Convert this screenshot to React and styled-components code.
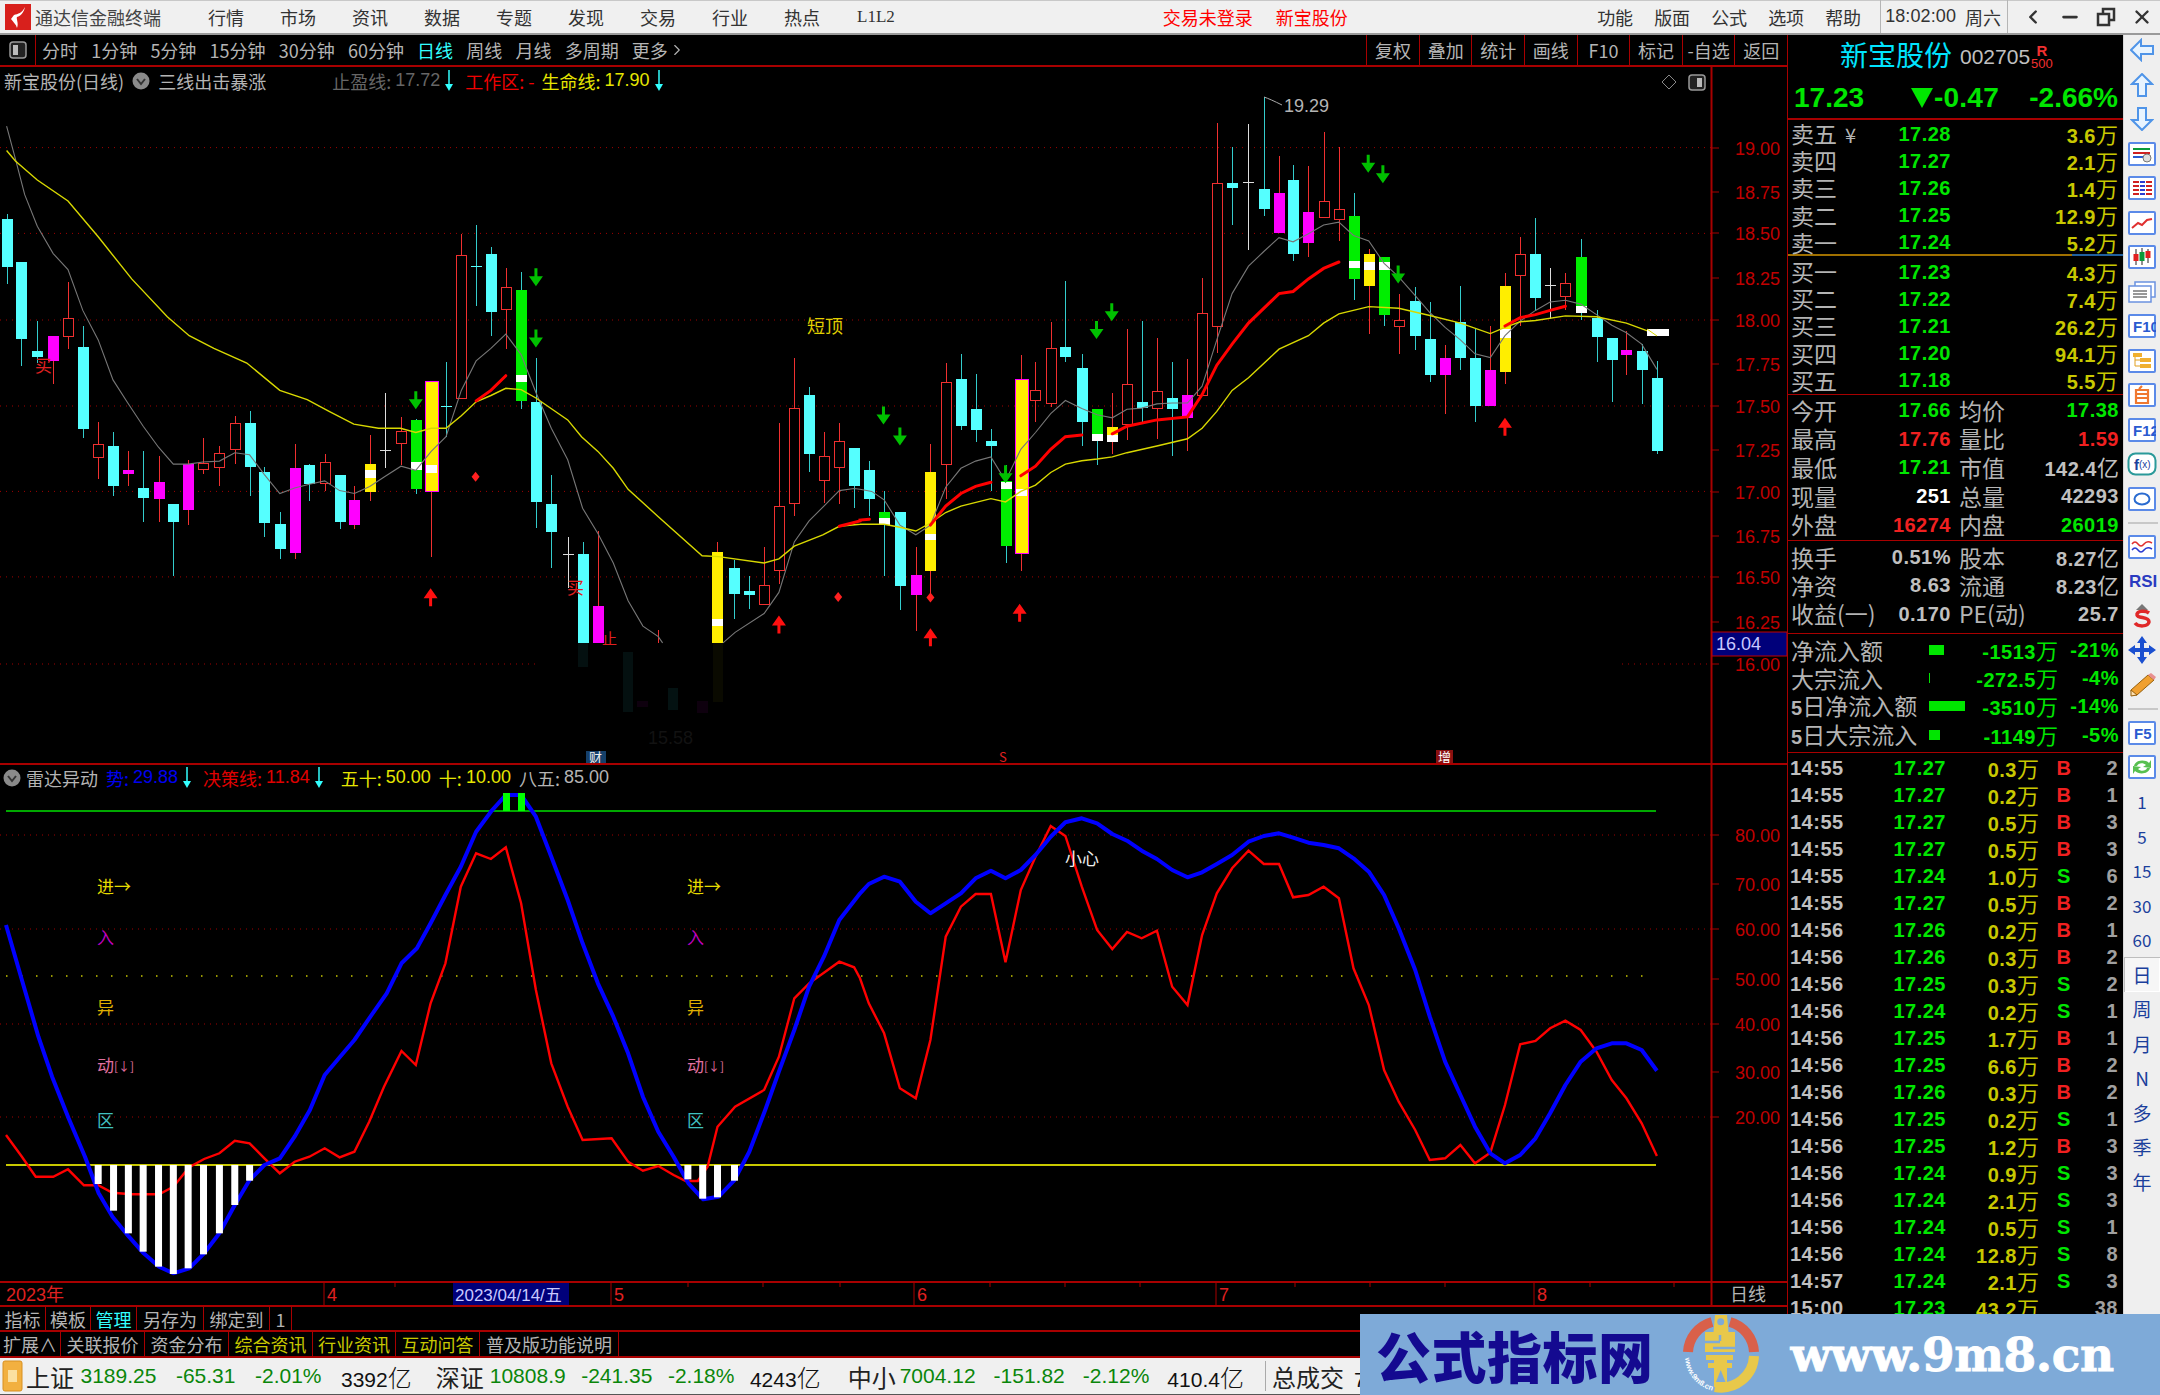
import React from 'react';
import styled, { createGlobalStyle } from 'styled-components';
import { ChevronLeft, Minus, X, ChevronRight } from 'lucide-react';

const RED_LINE = '#a80000';
const CJK = '"Noto Sans CJK SC", "Liberation Sans", sans-serif';
const LATIN = '"Liberation Sans", "Noto Sans CJK SC", sans-serif';

const GlobalStyle = createGlobalStyle`
    * { box-sizing: border-box; }
    html, body { margin: 0; padding: 0; background: #000; }
    body { font-family: ${CJK}; overflow: hidden; }
`;

const Page = styled.div`
    position: relative;
    width: 2160px;
    height: 1395px;
    background: #000;
    overflow: hidden;
`;

/* ---------- title bar ---------- */
const TitleBar = styled.header`
    display: flex;
    align-items: center;
    height: 35px;
    padding-left: 5px;
    padding-bottom: 1px;
    background: #f0f0f0;
    border-top: 1px solid #c8c8c8;
    border-bottom: 2px solid #9a9a9a;
    color: #333;
    font-size: 18px;
`;
const AppName = styled.span`margin-left: 4px; color: #444;`;
const MainMenu = styled.nav`
    display: flex;
    align-items: center;
    gap: 36px;
    margin-left: 47px;
`;
const MenuSerif = styled.span`
    font-family: "Liberation Serif", serif;
    font-size: 17px;
    margin-left: 1px;
`;
const Alert = styled.span`
    color: #f00;
    margin-left: ${p => p.$ml}px;
`;
const RightMenu = styled.nav`
    display: flex;
    gap: 21px;
    margin-left: auto;
`;
const ClockBox = styled.div`
    display: flex;
    gap: 9px;
    align-items: center;
    height: 33px;
    margin-left: 19px;
    padding: 0 6px 0 4px;
    border-left: 1px solid #b5b5b5;
    border-right: 1px solid #b5b5b5;
    font-size: 18px;
`;
const ClockTime = styled.span`font-family: ${LATIN}; letter-spacing: .1px;`;
const WindowButtons = styled.div`
    display: flex;
    align-items: center;
    gap: 15px;
    margin: 0 7px 0 14px;
    color: #333;
`;

/* ---------- layout ---------- */
const Main = styled.main`
    display: flex;
    height: 1323px;
`;
const LeftColumn = styled.div`
    display: flex;
    flex-direction: column;
    width: 1787px;
`;

/* ---------- period toolbar ---------- */
const Toolbar = styled.div`
    display: flex;
    align-items: center;
    height: 32px;
    border-bottom: 2px solid ${RED_LINE};
    color: #b4b4b4;
    font-size: 18px;
`;
const ToggleCell = styled.div`
    display: flex;
    align-items: center;
    justify-content: center;
    width: 36px;
    height: 100%;
    border-right: 1px solid ${RED_LINE};
`;
const Periods = styled.div`
    display: flex;
    gap: 13.2px;
    margin-left: 6px;
`;
const Period = styled.span`
    display: inline-flex;
    align-items: center;
    color: ${p => (p.$active ? '#3ff' : '#b4b4b4')};
`;
const ToolButtons = styled.div`
    display: flex;
    height: 100%;
    margin-left: auto;
`;
const ToolButton = styled.div`
    display: flex;
    align-items: center;
    justify-content: center;
    width: 52.6px;
    border-left: 1px solid ${RED_LINE};
`;

/* ---------- chart panes ---------- */
const Pane = styled.div`
    position: relative;
    height: ${p => p.$h}px;
    border-bottom: 2px solid ${RED_LINE};
`;
const ChartSvg = styled.svg`
    display: block;
`;
const Legend = styled.div`
    position: absolute;
    top: ${p => p.$top}px;
    left: 0;
    display: flex;
    align-items: center;
    height: 25px;
    padding-left: ${p => p.$pl}px;
    font-size: 18px;
    white-space: nowrap;
`;
const LegendItem = styled.span`
    color: ${p => p.$color || '#b4b4b4'};
    margin-left: ${p => p.$ml || 0}px;
    font-family: ${CJK};
    display: inline-flex;
    align-items: center;
    gap: 4px;
    b { font-weight: 400; font-family: ${LATIN}; }
`;
const AxisText = styled.text`
    font-family: ${LATIN};
    font-size: 18px;
    fill: ${p => p.$fill || '#c00000'};
`;
const ChartWord = styled.text`
    font-family: ${CJK};
    font-size: ${p => p.$size || 18}px;
    fill: ${p => p.$fill};
`;

/* ---------- tab rows below the charts ---------- */
const TabRow = styled.div`
    display: flex;
    height: ${p => p.$h}px;
    border-bottom: 2px solid ${RED_LINE};
`;
const Tab = styled.div`
    display: flex;
    align-items: center;
    justify-content: center;
    width: ${p => p.$w}px;
    border-right: 1px solid ${RED_LINE};
    color: ${p => p.$color || '#b4b4b4'};
    font-size: 18px;
    white-space: nowrap;
`;

/* ---------- quote panel ---------- */
const QuotePanel = styled.aside`
    display: flex;
    flex-direction: column;
    width: 336px;
    border-left: 1px solid ${RED_LINE};
    overflow: hidden;
`;
const StockHead = styled.div`
    display: flex;
    align-items: center;
    height: 45px;
    padding: 0 0 7px 52px;
`;
const StockName = styled.div`
    color: #00e4ff;
    font-size: 28px;
    line-height: 1;
`;
const StockCode = styled.div`
    margin-left: 8px;
    margin-top: 5px;
    color: #c0c0c0;
    font-family: ${LATIN};
    font-size: 21px;
`;
const Badges = styled.div`
    display: flex;
    flex-direction: column;
    align-items: center;
    margin-left: 1px;
    margin-top: 5px;
    color: #f03030;
    font-family: ${LATIN};
    line-height: 13px;
    font-size: 13px;
    b { font-size: 15px; }
`;
const PriceRow = styled.div`
    display: flex;
    align-items: center;
    justify-content: space-between;
    height: 40px;
    padding: 0 5px 2px 6px;
    border-bottom: 2px solid ${RED_LINE};
    color: #00e600;
    font-family: ${LATIN};
    font-weight: 700;
    font-size: 28px;
`;
const PriceDelta = styled.span`
    display: inline-flex;
    align-items: center;
    margin-left: 46px;
    letter-spacing: .2px;
`;
const PricePct = styled.span`margin-left: auto;`;
const Section = styled.section`
    height: ${p => p.$h}px;
    padding-top: ${p => p.$pt}px;
    border-bottom: 1px solid ${RED_LINE};
    flex: none;
`;
const OrderLine = styled(Section)`
    border-bottom: 2px solid;
    border-image: linear-gradient(to right, #a07000 0, #a07000 283px, #2060a0 283px, #2060a0 100%) 1;
`;
const OrderRow = styled.div`
    display: grid;
    grid-template-columns: 70px 90px 1fr;
    align-items: center;
    height: ${p => p.$row}px;
    padding: 0 5px 0 3px;
`;
const StatRow = styled.div`
    display: grid;
    grid-template-columns: 70px 90px 66px 1fr;
    align-items: center;
    height: ${p => p.$row}px;
    padding: 0 4px 0 3px;
`;
const FlowRow = styled.div`
    display: grid;
    grid-template-columns: 138px 40px 89px 1fr;
    align-items: center;
    height: 28.2px;
    padding: 0 4px 0 3px;
`;
const TickRow = styled.div`
    display: grid;
    grid-template-columns: 60px 96px 93px 50px 1fr;
    align-items: center;
    height: 27.03px;
    padding: 0 5px 0 2px;
`;
const Label = styled.span`
    color: #b4b4b4;
    font-size: 23px;
    line-height: 1;
    white-space: nowrap;
    padding-left: ${p => p.$pl || 0}px;
    i { font-style: normal; font-family: ${LATIN}; font-weight: 700; font-size: 20px; }
    small { font-size: 20px; margin-left: 8px; }
`;
const Num = styled.span`
    color: ${p => p.$color || '#c0c0c0'};
    font-family: ${LATIN};
    font-weight: 700;
    font-size: 20px;
    letter-spacing: .5px;
    line-height: 1;
    white-space: nowrap;
    text-align: ${p => p.$align || 'right'};
`;
const Unit = styled.span`
    font-family: ${CJK};
    font-weight: 400;
    font-size: 22px;
    letter-spacing: 0;
`;
const FlowBar = styled.span`
    display: block;
    width: ${p => p.$w}px;
    height: 10px;
    background: #00e600;
`;
const TickList = styled.div`
    padding-top: 1px;
    flex: 1;
    overflow: hidden;
`;

/* ---------- right icon strip ---------- */
const Strip = styled.nav`
    display: flex;
    flex-direction: column;
    width: 37px;
    background: #efefef;
    border-left: 1px solid #d8d8d8;
`;
const StripItem = styled.div`
    display: flex;
    align-items: center;
    justify-content: center;
    flex: none;
    height: 34.5px;
    color: #1b3f9c;
    font-family: ${CJK};
    font-size: ${p => p.$size || 17}px;
    box-shadow: ${p => (p.$on ? 'inset 1px 1px 0 #bdbdbd, inset -1px -1px 0 #fff' : 'none')};
    background: ${p => (p.$on ? '#f6f6f6' : 'transparent')};
    &:first-child { margin-top: -2px; }
`;
const StripRule = styled.div`
    flex: none;
    height: 13.5px;
    display: flex;
    align-items: center;
    &::after { content: ''; display: block; width: 30px; margin-left: 4px; height: 2px; background: #c8c8c8; }
`;

/* ---------- index ticker ---------- */
const StatusBar = styled.footer`
    display: flex;
    align-items: center;
    height: 37px;
    padding-left: 2px;
    background: #f0f0f0;
    border-bottom: 1px solid #555;
    white-space: nowrap;
    overflow: hidden;
`;
const IndexGroup = styled.div`
    display: flex;
    align-items: center;
    gap: ${p => p.$gap}px;
    margin-left: ${p => p.$ml}px;
`;
const IndexName = styled.span`
    color: #222;
    font-size: 24px;
    margin-right: ${p => p.$mr}px;
`;
const IndexNum = styled.span`
    color: ${p => p.$color || '#0a860a'};
    font-family: ${LATIN};
    font-size: 21px;
    span { font-family: ${CJK}; font-size: 24px; font-weight: 300; }
`;
const StatusRule = styled.div`
    width: 1px;
    height: 30px;
    margin: 0 6px 0 21px;
    background: #aaa;
`;

/* ---------- watermark ---------- */
const Watermark = styled.div`
    position: absolute;
    left: 1360px;
    right: 0;
    top: 1314px;
    bottom: 0;
    display: flex;
    align-items: center;
    background: #7eaad8;
`;
const MarkTitle = styled.div`
    margin-left: 16px;
    color: #140a90;
    font-family: ${CJK};
    font-weight: 900;
    font-size: 55px;
    letter-spacing: 0.5px;
    line-height: 1;
    white-space: nowrap;
`;
const MarkLogo = styled.div`
    display: flex;
    margin-left: 29px;
`;
const MarkUrl = styled.div`
    margin-left: 30px;
    color: #fff;
    font-family: "DejaVu Serif", serif;
    font-weight: 700;
    font-size: 47px;
    letter-spacing: -.4px;
    line-height: 1;
    white-space: nowrap;
    -webkit-text-stroke: .8px #fff;
`;

/* ---------- small drawings ---------- */
const AppLogo = () => (
    <svg width="26" height="26" viewBox="0 0 26 26">
        <rect width="26" height="26" fill="#d8201c" />
        <path d="M20 3 C17 9 13 10 9 11 L6 15 C8 18 11 20 12 24 C14 19 11 15 12 13 C16 12 19 8 20 3Z" fill="#fff" />
    </svg>
);
const RestoreIcon = () => (
    <svg width="20" height="20" viewBox="0 0 20 20" fill="none" stroke="#333" strokeWidth="2.5">
        <rect x="2" y="7" width="11" height="11" />
        <path d="M7 6 V2 H18 V13 H14" />
    </svg>
);
const PaneToggle = ({ side = 'left' }) => (
    <svg width="18" height="18" viewBox="0 0 18 18">
        <rect x="1" y="1" width="16" height="16" rx="3" fill="#222" stroke="#999" strokeWidth="1.5" />
        <rect x={side === 'left' ? 4 : 9} y="4" width="5" height="10" fill="#bbb" />
    </svg>
);
const RoundToggle = () => (
    <svg width="18" height="18" viewBox="0 0 18 18">
        <circle cx="9" cy="9" r="8.5" fill="#8a8a8a" />
        <path d="M5 7 L9 12 L13 7" fill="none" stroke="#333" strokeWidth="2" />
    </svg>
);
const ValueArrow = () => (
    <svg width="10" height="22" viewBox="0 0 10 22">
        <path d="M5 0 V16" stroke="#3ff" strokeWidth="1.5" />
        <path d="M1 14 H9 L5 21Z" fill="#3ff" />
    </svg>
);

const HollowArrow = ({ dir }) => {
    const rot = { left: -90, up: 0, down: 180 }[dir];
    return (
        <svg width="24" height="24" viewBox="0 0 24 24">
            <path transform={`rotate(${rot} 12 12)`} d="M12 1 L22 11 H16 V23 H8 V11 H2Z" fill="#e8f4ff" stroke="#4f94e8" strokeWidth="2" />
        </svg>
    );
};
const FrameIcon = ({ children }) => (
    <svg width="28" height="24" viewBox="0 0 28 24">
        <rect x="1" y="1" width="26" height="22" fill="#fff" stroke="#5b8ae8" strokeWidth="2" rx="1" />
        {children}
    </svg>
);
const FrameText = styled.text`
    font-family: ${LATIN};
    font-size: 15px;
    fill: ${p => p.$fill || '#2a5bd0'};
    font-weight: ${p => p.$weight || 400};
`;
const stripIcons = [
    <HollowArrow dir="left" />,
    <HollowArrow dir="up" />,
    <HollowArrow dir="down" />,
    <FrameIcon>
        <path d="M5 7 H22" stroke="#0a9a3a" strokeWidth="2" /><path d="M5 11 H22" stroke="#d02020" strokeWidth="2" />
        <path d="M5 15 H15" stroke="#2a5bd0" strokeWidth="2" />
        <circle cx="19" cy="16" r="4" fill="#ddd" stroke="#777" />
    </FrameIcon>,
    <FrameIcon>
        {[6, 10, 14, 18].map(y => (
            <g key={y}>
                <path d={`M5 ${y} H11`} stroke="#d02020" strokeWidth="2" />
                <path d={`M12 ${y} H17`} stroke="#2a3bd0" strokeWidth="2" />
                <path d={`M18 ${y} H24`} stroke="#d02020" strokeWidth="2" />
            </g>
        ))}
    </FrameIcon>,
    <FrameIcon><path d="M4 17 L10 12 L14 14 L19 9 L24 8" fill="none" stroke="#e03030" strokeWidth="2" /></FrameIcon>,
    <FrameIcon>
        <path d="M8 4 V20 M14 3 V20 M20 4 V18" stroke="#222" />
        <rect x="5.5" y="9" width="5" height="7" fill="#e02020" /><rect x="11.5" y="7" width="5" height="9" fill="#0a9a3a" /><rect x="17.5" y="6" width="5" height="7" fill="#e02020" />
    </FrameIcon>,
    <svg width="30" height="24" viewBox="0 0 30 24" fill="#fff" stroke="#6b92e0" strokeWidth="1.5">
        <rect x="8" y="2" width="20" height="15" /><rect x="2" y="6" width="22" height="16" />
        <path d="M6 11 H20 M6 14 H20 M6 17 H20" stroke="#777" />
    </svg>,
    <FrameIcon><FrameText x="5" y="18" $weight="700">F10</FrameText></FrameIcon>,
    <FrameIcon>
        <path d="M7 7 V17 H12 M7 11 H12" stroke="#e0a020" fill="none" />
        <rect x="5" y="4" width="9" height="4" fill="#f0b030" /><rect x="12" y="9" width="11" height="4" fill="#f0b030" /><rect x="12" y="15" width="11" height="4" fill="#f0b030" />
    </FrameIcon>,
    <FrameIcon>
        <path d="M14 3 L11 6 M8 7 H20 V20 H8Z M8 11 H20 M8 15 H20" fill="none" stroke="#f07830" strokeWidth="2.2" />
    </FrameIcon>,
    <FrameIcon><FrameText x="5" y="18" $weight="700">F12</FrameText></FrameIcon>,
    <svg width="30" height="24" viewBox="0 0 30 24">
        <rect x="1.5" y="1.5" width="27" height="21" rx="7" fill="#fff" stroke="#2a9a9a" strokeWidth="2" />
        <FrameText x="7" y="18" $fill="#1b3f9c" $weight="700">f</FrameText>
        <FrameText x="12" y="16" $fill="#1b3f9c" style={{ fontSize: 10 }}>(x)</FrameText>
    </svg>,
    <FrameIcon><ellipse cx="14" cy="12" rx="7.5" ry="5.5" fill="#fff" stroke="#2a6bd0" strokeWidth="2" /></FrameIcon>,
];
const stripIconsB = [
    <FrameIcon>
        <path d="M4 9 Q7 5 10 9 T16 9 T24 8" fill="none" stroke="#e03030" strokeWidth="1.5" />
        <path d="M4 15 Q7 11 10 15 T16 15 T24 14" fill="none" stroke="#2a3bd0" strokeWidth="1.5" />
    </FrameIcon>,
    <svg width="30" height="20" viewBox="0 0 30 20"><FrameText x="2" y="16" $fill="#2a3ac0" $weight="700" style={{ fontSize: 17 }}>RSI</FrameText></svg>,
    <svg width="28" height="26" viewBox="0 0 28 26">
        <path d="M14 1 L20 7 H8Z" fill="#777" />
        <path d="M21 10 C17 7 8 8 9 12 C10 16 21 13 21 19 C20 24 10 24 7 20" fill="none" stroke="#e02828" strokeWidth="3.5" />
    </svg>,
    <svg width="28" height="28" viewBox="0 0 28 28" fill="#1a4fd0">
        <path d="M14 0 L19 7 H9Z M14 28 L9 21 H19Z M0 14 L7 9 V19Z M28 14 L21 19 V9Z" />
        <path d="M14 6 V22 M6 14 H22" stroke="#1a4fd0" strokeWidth="4" />
    </svg>,
    <svg width="28" height="26" viewBox="0 0 28 26">
        <path d="M4 23 L3 18 L20 3 L26 8 L9 23Z" fill="#f0a030" stroke="#96600c" />
        <path d="M3 18 L9 23 L3 24Z" fill="#ffe0b0" stroke="#96600c" />
        <path d="M20 3 L26 8 L28 5 L23 1Z" fill="#e89090" />
    </svg>,
];
const stripIconsC = [
    <FrameIcon><FrameText x="6" y="18" $weight="700">F5</FrameText></FrameIcon>,
    <FrameIcon>
        <path d="M6 11 C7 5 17 4 21 8 L23 5 L23 13 L15 12 L18 10 C15 7 10 8 9 11Z" fill="#58c050" />
        <path d="M22 13 C21 19 11 20 7 16 L5 19 L5 11 L13 12 L10 14 C13 17 18 16 19 13Z" fill="#58c050" />
    </FrameIcon>,
];

const Logo = () => (
    <svg width="78" height="80" viewBox="0 0 78 80">
        <defs>
            <path id="markArc" d="M2 43 A36 36 0 0 0 31 76" fill="none" />
        </defs>
        <path d="M5 37 A33 33 0 0 1 29 7" fill="none" stroke="#d9604a" strokeWidth="10" />
        <path d="M71 37 A33 33 0 0 0 47 7" fill="none" stroke="#d9604a" strokeWidth="10" />
        <path d="M71 41 A33 33 0 0 1 32 72" fill="none" stroke="#e8c84a" strokeWidth="10" />
        <text fill="#fff" fontFamily={LATIN} fontSize="7.5" fontWeight="700">
            <textPath href="#markArc">www.9m8.cn</textPath>
        </text>
        <path d="M32 0 H44 L45.5 17 H52 V37 H22 V17 H30.5Z" fill="#e8c84a" />
        <circle cx="37.7" cy="6.7" r="3.5" fill="#7eaad8" />
        <path d="M22 27 H37 M30 33 H52 M37 20 V26" stroke="#7eaad8" strokeWidth="2.5" fill="none" />
        <rect x="23" y="40" width="27" height="5" fill="#e8c84a" />
        <rect x="25" y="48" width="24" height="5" fill="#e8c84a" />
        <path d="M31 40 H44 V72 H31Z" fill="#e8c84a" />
        <path d="M37.7 55 L33 67 H42.5Z" fill="#7eaad8" />
    </svg>
);

/* ---------- price chart data, x/y as read off the two halves of the chart ---------- */
const leftPt = (x, y) => [x / 1.823, 100 + y / 2.376];
const rightPt = (x, y) => [860 + x / 1.704, 100 + y / 2.376];

// x, wick top, wick bottom, body top, body bottom, kind, white mark top, white mark bottom
const candlesLeft = [
    [12, 272, 436, 283, 397, 'c'], [39, 385, 632, 386, 567, 'c'], [67, 525, 625, 597, 610, 'c'], [97, 560, 675, 561, 620, 'm'],
    [124, 432, 592, 520, 563, 'r'], [151, 537, 803, 586, 782, 'c'], [179, 765, 900, 819, 849, 'r'], [206, 790, 942, 822, 917, 'c'],
    [233, 833, 917, 879, 889, 'm'], [261, 833, 1003, 921, 945, 'c'], [289, 847, 1003, 908, 948, 'm'], [316, 960, 1131, 961, 1003, 'c'],
    [343, 855, 1010, 864, 973, 'm'], [370, 803, 889, 864, 877, 'r'], [400, 822, 917, 841, 873, 'r'], [428, 750, 865, 769, 831, 'r'],
    [455, 740, 942, 768, 873, 'c'], [482, 872, 1038, 885, 1005, 'c'], [510, 978, 1090, 1007, 1067, 'c'], [537, 818, 1090, 875, 1077, 'm'],
    [564, 865, 953, 868, 913, 'c'], [592, 842, 930, 862, 912, 'r'], [619, 890, 1020, 890, 1003, 'c'], [646, 918, 1020, 950, 1010, 'm'],
    [674, 797, 952, 864, 931, 'y', 880, 897], [701, 697, 875, 832, 835, 'w'], [731, 754, 868, 787, 816, 'r'],
    [758, 757, 935, 761, 925, 'g', 860, 880], [786, 670, 1085, 670, 931, 'Y', 868, 886], [813, 622, 800, 726, 729, 'c'],
    [841, 318, 708, 370, 709, 'r'], [868, 297, 490, 394, 397, 'c'], [895, 350, 560, 365, 503, 'c'], [922, 398, 592, 445, 498, 'r'],
    [950, 408, 735, 451, 714, 'g', 654, 670], [977, 612, 1017, 718, 955, 'c'], [1005, 890, 1113, 961, 1027, 'c'],
    [1035, 1038, 1160, 1079, 1082, 'w'], [1062, 1050, 1290, 1078, 1290, 'c'], [1090, 1025, 1290, 1203, 1290, 'm'], [1200, 1260, 1290, 1290, 1290, 'r'],
    [1308, 1050, 1290, 1075, 1290, 'y', 1232, 1250], [1338, 1092, 1232, 1113, 1173, 'c'], [1366, 1132, 1210, 1166, 1177, 'c'],
    [1393, 1062, 1200, 1153, 1198, 'r'], [1420, 768, 1150, 965, 1118, 'r'], [1448, 612, 988, 733, 958, 'r'], [1475, 683, 885, 700, 842, 'c'],
    [1502, 790, 958, 847, 905, 'r'], [1530, 768, 960, 811, 872, 'r'], [1557, 828, 970, 828, 917, 'c'],
];
const candlesRight = [
    [16, 857, 988, 879, 948, 'c'], [41, 930, 1130, 978, 1010, 'g', 993, 1010], [68, 978, 1212, 978, 1155, 'c'], [95, 1063, 1262, 1128, 1176, 'm'],
    [120, 818, 1180, 885, 1120, 'y', 1032, 1045], [146, 625, 948, 672, 866, 'r'], [172, 603, 785, 664, 775, 'c'], [197, 650, 813, 735, 785, 'c'],
    [223, 782, 928, 810, 821, 'c'], [248, 868, 1100, 905, 1060, 'g', 908, 925], [274, 607, 1120, 664, 1077, 'Y', 925, 942], [299, 622, 765, 690, 713, 'r'],
    [325, 528, 730, 590, 720, 'r'], [350, 430, 622, 586, 611, 'c'], [378, 603, 822, 636, 764, 'c'], [404, 733, 868, 733, 810, 'g', 793, 810],
    [430, 697, 840, 778, 813, 'y', 797, 813], [455, 543, 808, 677, 770, 'r'], [480, 525, 766, 718, 732, 'c'], [506, 565, 805, 693, 733, 'r'],
    [532, 622, 846, 707, 735, 'c'], [558, 615, 835, 700, 756, 'm'], [583, 422, 700, 508, 702, 'r'], [608, 55, 600, 198, 538, 'r'],
    [634, 112, 298, 198, 210, 'c'], [662, 58, 356, 194, 197, 'w'], [688, -6, 275, 212, 258, 'c'], [714, 133, 315, 220, 315, 'm'],
    [738, 155, 382, 190, 365, 'c'], [764, 158, 372, 265, 340, 'm'], [790, 75, 280, 241, 278, 'r'], [816, 112, 335, 259, 283, 'r'],
    [841, 222, 475, 276, 425, 'g', 382, 400], [867, 355, 555, 365, 442, 'y', 385, 403], [893, 372, 537, 372, 510, 'g', 385, 403], [918, 462, 603, 523, 538, 'r'],
    [946, 445, 595, 477, 561, 'c'], [971, 480, 670, 568, 653, 'c'], [997, 583, 746, 614, 653, 'm'], [1023, 443, 642, 527, 614, 'c'],
    [1048, 545, 765, 614, 728, 'c'], [1074, 537, 728, 642, 728, 'm'], [1099, 412, 675, 443, 646, 'y', 545, 565], [1125, 325, 538, 367, 417, 'r'],
    [1151, 280, 500, 365, 471, 'c'], [1176, 398, 520, 439, 442, 'w'], [1202, 412, 500, 437, 466, 'r'], [1228, 330, 522, 372, 490, 'g', 490, 507],
    [1255, 500, 622, 517, 563, 'c'], [1281, 565, 718, 565, 617, 'c'], [1306, 550, 654, 593, 607, 'm'], [1332, 580, 722, 597, 642, 'c'], [1358, 620, 842, 660, 835, 'c'],
];
const CANDLE = {
    c: { wick: '#3cc', body: '#55ffff' },
    r: { wick: '#f03030', body: null },
    m: { wick: '#f03030', body: '#ff00ff' },
    g: { wick: '#3cc', body: '#00ee00' },
    y: { wick: '#f03030', body: '#ffee00' },
    Y: { wick: '#f03030', body: '#ffee00', edge: '#ff00ff' },
    w: { wick: '#ddd', body: '#ddd' },
};

const pairs = (arr, fn) => {
    const out = [];
    for (let i = 0; i < arr.length; i += 2) out.push(fn(arr[i], arr[i + 1]));
    return out;
};
const toPoints = list => list.map(p => p.map(v => v.toFixed(1)).join(',')).join(' ');

const grayLineA = pairs([12, 62, 28, 140, 45, 225, 68, 300, 97, 365, 124, 403, 151, 500, 179, 570, 206, 665, 233, 720, 261, 775, 289, 825, 316, 865, 343, 865, 370, 860, 400, 858, 428, 838, 455, 843, 482, 890, 510, 935, 537, 922, 564, 913, 592, 905, 619, 928, 646, 935, 674, 918, 701, 895, 731, 870, 758, 880, 786, 835, 813, 800, 841, 690, 868, 620, 895, 590, 922, 556, 950, 605, 977, 695, 1005, 780, 1035, 855, 1062, 970, 1090, 1030, 1118, 1100, 1145, 1190, 1172, 1250, 1200, 1275, 1208, 1290], leftPt);
const grayLineB = [
    ...pairs([1318, 1290, 1340, 1265, 1393, 1220, 1420, 1170, 1448, 1050, 1475, 1000, 1502, 965, 1530, 928, 1557, 923], leftPt),
    ...pairs([0, 925, 20, 930, 41, 950, 68, 1010, 95, 1033, 120, 1010, 146, 920, 172, 875, 197, 858, 223, 848, 248, 905, 274, 830, 299, 790, 325, 745, 350, 714, 378, 733, 404, 748, 430, 755, 455, 735, 480, 732, 506, 722, 532, 720, 558, 720, 583, 680, 608, 570, 634, 460, 662, 395, 688, 360, 714, 327, 738, 337, 764, 318, 790, 297, 816, 290, 841, 322, 867, 335, 893, 388, 918, 420, 946, 465, 971, 505, 997, 540, 1023, 570, 1048, 603, 1074, 612, 1099, 560, 1125, 525, 1151, 500, 1176, 480, 1202, 476, 1228, 485, 1255, 510, 1281, 535, 1306, 553, 1332, 580, 1358, 640], rightPt),
];
const yellowLine = [
    ...pairs([12, 120, 28, 145, 68, 190, 124, 240, 179, 325, 240, 425, 305, 515, 345, 560, 390, 590, 450, 625, 510, 690, 560, 712, 600, 740, 645, 770, 690, 780, 730, 780, 758, 790, 786, 780, 813, 780, 841, 750, 868, 717, 895, 702, 922, 685, 950, 688, 977, 708, 1035, 760, 1060, 800, 1090, 835, 1118, 875, 1145, 925, 1200, 990, 1280, 1083, 1310, 1085, 1393, 1100, 1420, 1090, 1448, 1060, 1500, 1033, 1530, 1013, 1568, 1008], leftPt),
    ...pairs([0, 1008, 41, 1008, 68, 1015, 95, 1024, 120, 1005, 146, 980, 172, 965, 223, 947, 248, 955, 274, 930, 299, 915, 325, 885, 350, 865, 378, 857, 404, 853, 430, 848, 455, 838, 506, 822, 558, 805, 583, 780, 608, 740, 634, 690, 662, 660, 714, 592, 764, 560, 790, 530, 816, 508, 867, 491, 918, 495, 971, 512, 1023, 530, 1074, 555, 1099, 540, 1125, 527, 1151, 524, 1202, 513, 1255, 515, 1306, 530, 1358, 557], rightPt),
];
const redRuns = [
    pairs([868, 715, 895, 690, 922, 655], leftPt),
    [...pairs([1530, 1013, 1568, 1000], leftPt), ...pairs([0, 998, 16, 996], rightPt)],
    pairs([120, 1010, 146, 965, 172, 935, 197, 918, 223, 908], rightPt),
    pairs([274, 893, 299, 870, 325, 830, 350, 800, 378, 796], rightPt),
    pairs([430, 793, 455, 775, 506, 760, 558, 753, 583, 700, 608, 630, 634, 580, 662, 530, 714, 460, 738, 455, 764, 425, 790, 400, 816, 385], rightPt),
    pairs([1099, 537, 1125, 517, 1151, 510, 1176, 500, 1202, 490], rightPt),
];
const arrowsDown = [
    ...pairs([758, 692, 977, 400, 977, 545], leftPt),
    ...pairs([40, 728, 68, 778, 248, 868, 403, 525, 429, 483, 866, 130, 891, 155, 917, 393], rightPt),
];
const arrowsUp = [
    ...pairs([785, 1160, 1420, 1225], leftPt),
    ...pairs([120, 1255, 272, 1197, 1099, 755], rightPt),
];
const diamonds = [...pairs([867, 895, 1528, 1181], leftPt), ...pairs([120, 1182], rightPt)];

const priceGrid = [147.6, 233.4, 320, 406, 491.4, 576.9];
const priceLabels = [
    ['19.00', 148], ['18.75', 192], ['18.50', 233], ['18.25', 278], ['18.00', 320], ['17.75', 364], ['17.50', 406],
    ['17.25', 450], ['17.00', 492], ['16.75', 536], ['16.50', 577], ['16.25', 622], ['16.00', 664],
];

const Candle = ({ pt, data }) => {
    const [, wt, wb, bt, bb, kind, mt, mb] = data;
    const style = CANDLE[kind];
    const x = Math.round(pt(data[0], 0)[0]);
    const y = v => 100 + v / 2.376;
    const hollow = !style.body;
    const half = kind === 'Y' ? 6 : 5;
    return (
        <g shapeRendering="crispEdges">
            {hollow ? (
                <>
                    <path d={`M${x + 0.5} ${y(wt)} V${y(bt)} M${x + 0.5} ${y(bb)} V${y(wb)}`} stroke={style.wick} />
                    <rect x={x - 4.5} y={y(bt)} width="10" height={y(bb) - y(bt)} fill="#000" stroke={style.wick} />
                </>
            ) : (
                <>
                    <path d={`M${x + 0.5} ${y(wt)} V${y(wb)}`} stroke={style.wick} />
                    <rect x={x - half} y={y(bt)} width={half * 2 + 1} height={Math.max(y(bb) - y(bt), 1)} fill={style.body} stroke={style.edge || 'none'} />
                </>
            )}
            {mt && <rect x={x - 5} y={y(mt)} width="11" height={y(mb) - y(mt)} fill="#fff" />}
        </g>
    );
};

const Arrow = ({ x, y, up, color }) => (
    up ? (
        <path d={`M${x} ${y} L${x + 7} ${y + 10} H${x + 1.5} V${y + 18} H${x - 1.5} V${y + 10} H${x - 7}Z`} fill={color} />
    ) : (
        <path d={`M${x} ${y + 18} L${x + 7} ${y + 8} H${x + 1.5} V${y} H${x - 1.5} V${y + 8} H${x - 7}Z`} fill={color} />
    )
);

const PriceChart = () => (
    <ChartSvg width="1787" height="696" viewBox="0 67 1787 696">
        {priceGrid.map(y => <path key={y} d={`M0 ${y} H1711`} stroke="#a00000" strokeDasharray="1 5" />)}
        <path d="M0 664 H537 M1622 664 H1711" stroke="#a00000" strokeDasharray="1 5" />

        {/* faint leftovers under the cut-off part of the chart */}
        <g>
            <rect x="578" y="643" width="10" height="24" fill="#041010" />
            <rect x="623" y="652" width="10" height="60" fill="#041010" />
            <rect x="637" y="701" width="11" height="6" fill="#0e000e" />
            <rect x="668" y="688" width="10" height="22" fill="#041212" />
            <rect x="697" y="701" width="11" height="12" fill="#0e000e" />
            <rect x="713" y="643" width="10" height="59" fill="#0a0a00" />
        </g>
        <AxisText x="648" y="744" $fill="#121212">15.58</AxisText>

        {candlesLeft.map(c => <Candle key={c[0]} pt={leftPt} data={c} />)}
        {candlesRight.map(c => <Candle key={c[0]} pt={rightPt} data={c} />)}

        <polyline points={toPoints(grayLineA)} fill="none" stroke="#777" strokeWidth="1.1" />
        <polyline points={toPoints(grayLineB)} fill="none" stroke="#777" strokeWidth="1.1" />
        <polyline points={toPoints(yellowLine)} fill="none" stroke="#d8d800" strokeWidth="1.4" />
        {redRuns.map((run, i) => <polyline key={i} points={toPoints(run)} fill="none" stroke="#ff0000" strokeWidth="3" strokeLinecap="round" />)}
        <rect x="1647" y="329" width="22" height="7" fill="#fff" />
        <path d="M1647 329 L1657 336" stroke="#d8d800" />

        {arrowsDown.map(([x, y], i) => <Arrow key={i} x={x} y={y} color="#00c000" />)}
        {arrowsUp.map(([x, y], i) => <Arrow key={i} x={x} y={y} up color="#ff1010" />)}
        {diamonds.map(([x, y], i) => <path key={i} d={`M${x} ${y - 5} L${x + 4} ${y} L${x} ${y + 5} L${x - 4} ${y}Z`} fill="#ff2020" />)}

        <ChartWord x="35" y="372" $fill="#e02020" $size="17">买</ChartWord>
        <ChartWord x="567" y="594" $fill="#e02020" $size="17">买</ChartWord>
        <ChartWord x="602" y="644" $fill="#e02020" $size="15">止</ChartWord>
        <ChartWord x="807" y="333" $fill="#e0d000" $size="18">短顶</ChartWord>
        <path d="M1264 97 Q1270 99 1282 105" fill="none" stroke="#aaa" />
        <AxisText x="1284" y="112" $fill="#b4b4b4">19.29</AxisText>

        <rect x="586" y="751" width="20" height="12" fill="#16406a" />
        <ChartWord x="589" y="762" $fill="#eee" $size="13">财</ChartWord>
        <ChartWord x="999" y="762" $fill="#e02020" $size="13">S</ChartWord>
        <rect x="1436" y="750" width="17" height="13" fill="#8a1010" />
        <ChartWord x="1438" y="762" $fill="#fff" $size="13">增</ChartWord>

        <path d="M1669 75 L1676 82 L1669 89 L1662 82Z" fill="none" stroke="#888" />
        <rect x="1689" y="75" width="16" height="15" rx="3" fill="#222" stroke="#999" strokeWidth="1.5" />
        <rect x="1697" y="78" width="5" height="9" fill="#bbb" />

        <path d="M1711.5 67 V763" stroke={RED_LINE} strokeWidth="2" />
        {priceLabels.map(([t, y]) => (
            <g key={t}>
                <path d={`M1712 ${y} H1719`} stroke={RED_LINE} />
                <AxisText x="1735" y={y + 7}>{t}</AxisText>
            </g>
        ))}
        <rect x="1712" y="632" width="75" height="24" fill="#00007a" stroke="#c00000" />
        <AxisText x="1716" y="650" $fill="#c8c8ff">16.04</AxisText>
    </ChartSvg>
);

/* ---------- indicator data ---------- */
const blueLine = [
    ...pairs([11, 495, 40, 660, 70, 830, 95, 950, 125, 1075, 155, 1190, 180, 1300, 205, 1370, 235, 1430, 262, 1480, 290, 1520, 316, 1540, 345, 1525, 372, 1480, 400, 1420, 428, 1335, 455, 1260, 482, 1215, 510, 1195, 537, 1130, 565, 1050, 592, 945, 620, 890, 646, 840, 673, 775, 705, 700, 732, 610, 760, 565, 785, 490, 812, 405, 840, 320, 868, 215, 895, 155, 922, 105, 950, 105, 977, 170, 1005, 290, 1035, 420, 1062, 550, 1090, 670, 1118, 770, 1145, 880, 1172, 1010, 1200, 1115, 1228, 1190, 1255, 1270, 1282, 1318, 1310, 1310, 1338, 1262, 1366, 1175, 1395, 1050, 1420, 935, 1448, 810, 1475, 680, 1502, 590, 1530, 480, 1568, 400], (x, y) => [x / 1.823, 760 + y / 3]),
    ...pairs([15, 372, 41, 350, 68, 365, 95, 425, 120, 460, 146, 430, 172, 400, 197, 355, 223, 332, 248, 355, 274, 330, 299, 285, 325, 230, 350, 187, 378, 175, 404, 190, 430, 222, 455, 242, 480, 272, 506, 297, 532, 330, 558, 352, 583, 337, 608, 312, 634, 285, 662, 245, 688, 228, 714, 220, 738, 233, 764, 248, 790, 255, 816, 265, 841, 295, 867, 335, 893, 405, 918, 505, 946, 630, 971, 770, 997, 905, 1023, 1005, 1048, 1100, 1074, 1180, 1099, 1210, 1125, 1185, 1151, 1135, 1176, 1060, 1202, 975, 1228, 905, 1255, 865, 1281, 850, 1306, 850, 1332, 870, 1358, 932], (x, y) => [860 + x / 1.704, 760 + y / 3]),
];
const redLine = [
    ...pairs([11, 1125, 40, 1190, 65, 1250, 97, 1250, 124, 1228, 153, 1276, 179, 1276, 205, 1298, 240, 1303, 290, 1303, 316, 1280, 345, 1222, 372, 1197, 400, 1180, 428, 1142, 455, 1150, 482, 1195, 510, 1240, 537, 1205, 564, 1190, 592, 1165, 619, 1192, 646, 1175, 673, 1085, 700, 980, 732, 873, 758, 915, 785, 730, 812, 610, 840, 380, 868, 280, 895, 297, 922, 262, 950, 430, 977, 690, 1005, 910, 1035, 1040, 1062, 1140, 1115, 1135, 1145, 1205, 1172, 1232, 1200, 1218, 1228, 1245, 1250, 1263, 1272, 1263, 1290, 1220, 1308, 1100, 1340, 1040, 1393, 990, 1420, 890, 1448, 715, 1475, 670, 1530, 605, 1557, 622], (x, y) => [x / 1.823, 760 + y / 3]),
    ...pairs([0, 655, 15, 730, 41, 820, 68, 985, 95, 1015, 120, 840, 146, 530, 172, 440, 197, 402, 223, 402, 248, 607, 274, 390, 299, 290, 325, 198, 350, 228, 378, 380, 404, 510, 430, 567, 455, 516, 480, 535, 506, 512, 532, 680, 558, 735, 583, 525, 608, 400, 634, 325, 662, 272, 688, 312, 714, 312, 738, 412, 764, 405, 790, 380, 816, 415, 841, 625, 867, 735, 893, 930, 918, 1025, 946, 1110, 971, 1200, 997, 1195, 1023, 1155, 1048, 1210, 1074, 1178, 1099, 1035, 1125, 853, 1151, 843, 1176, 805, 1202, 782, 1228, 810, 1255, 875, 1281, 960, 1306, 1015, 1332, 1090, 1358, 1188], (x, y) => [860 + x / 1.704, 760 + y / 3]),
];
const whiteBars = [
    [179, 1272], [207, 1352], [234, 1420], [261, 1475], [289, 1520], [316, 1542], [343, 1525], [371, 1483], [400, 1420], [428, 1335], [455, 1262],
    [1254, 1258], [1281, 1316], [1308, 1312], [1339, 1262],
];
const signalWords = [
    ['进→', 887, '#e6dc00'], ['入', 938, '#c000c0'], ['异', 1008, '#e0b000'], ['动', 1066, '#e070a0', '[↓]'], ['区', 1121, '#40c0c0'],
];
const indicatorGrid = [835, 929, 1024, 1117];
const indicatorLabels = [['80.00', 835], ['70.00', 884], ['60.00', 929], ['50.00', 979], ['40.00', 1024], ['30.00', 1072], ['20.00', 1117]];

const IndicatorChart = () => (
    <ChartSvg width="1787" height="516" viewBox="0 765 1787 516">
        {indicatorGrid.map(y => <path key={y} d={`M0 ${y} H1711`} stroke="#a00000" strokeDasharray="1 5" />)}
        <path d="M6 976 H1656" stroke="#c8c800" strokeWidth="1.5" strokeDasharray="1.5 13.5" />

        <path d="M6 811 H1656" stroke="#00a800" strokeWidth="2" />
        <path d="M6 1165 H1656" stroke="#c8c800" strokeWidth="2" />

        <polyline points={toPoints(redLine)} fill="none" stroke="#ff0000" strokeWidth="2.4" />
        <polyline points={toPoints(blueLine)} fill="none" stroke="#0000ff" strokeWidth="4" strokeLinejoin="round" />
        {whiteBars.map(([x, b]) => <rect key={x} x={x / 1.823 - 3.5} y="1165" width="7" height={(b - 1215) / 3} fill="#fff" />)}
        <rect x="503" y="793" width="7" height="18" fill="#00ff00" />
        <rect x="518" y="793" width="7" height="18" fill="#00ff00" />

        {[97, 687].map(x => signalWords.map(([t, y, c, tail]) => (
            <ChartWord key={x + t} x={x} y={y + 6} $fill={c} $size="17">
                {t}{tail && <tspan fontSize="12" dy="-1">{tail}</tspan>}
            </ChartWord>
        )))}
        <ChartWord x="1065" y="865" $fill="#eee" $size="17">小心</ChartWord>

        <path d="M1711.5 765 V1281" stroke={RED_LINE} strokeWidth="2" />
        {indicatorLabels.map(([t, y]) => (
            <g key={t}>
                <path d={`M1712 ${y} H1719`} stroke={RED_LINE} />
                <AxisText x="1735" y={y + 7}>{t}</AxisText>
            </g>
        ))}
    </ChartSvg>
);

const monthMarks = [['4', 324], ['5', 611], ['6', 914], ['7', 1216], ['8', 1534]];
const minorTicks = [395, 688, 763, 840, 990, 1065, 1140, 1295, 1370, 1445, 1590, 1674];
const TimeAxis = () => (
    <ChartSvg width="1787" height="22" viewBox="0 1283 1787 22">
        <AxisText x="6" y="1301" $fill="#e02020">2023年</AxisText>
        {monthMarks.map(([t, x]) => (
            <g key={t}>
                <path d={`M${x} 1283 V1305`} stroke={RED_LINE} />
                <AxisText x={x + 3} y="1301" $fill="#e02020">{t}</AxisText>
            </g>
        ))}
        {minorTicks.map(x => <path key={x} d={`M${x} 1283 V1287`} stroke={RED_LINE} />)}
        <rect x="453" y="1283" width="116" height="22" fill="#00007a" />
        <AxisText x="455" y="1301" $fill="#c8c8ff" style={{ fontSize: 17 }}>2023/04/14/五</AxisText>
        <path d="M1711.5 1283 V1305" stroke={RED_LINE} strokeWidth="2" />
        <ChartWord x="1730" y="1301" $fill="#b4b4b4">日线</ChartWord>
    </ChartSvg>
);

/* ---------- quote data ---------- */
const GREEN = '#00e600';
const RED = '#f02020';
const YELLOW = '#c8c800';
const GRAY = '#c0c0c0';

const sells = [['卖五', '17.28', '3.6'], ['卖四', '17.27', '2.1'], ['卖三', '17.26', '1.4'], ['卖二', '17.25', '12.9'], ['卖一', '17.24', '5.2']];
const buys = [['买一', '17.23', '4.3'], ['买二', '17.22', '7.4'], ['买三', '17.21', '26.2'], ['买四', '17.20', '94.1'], ['买五', '17.18', '5.5']];
const statsA = [
    ['今开', '17.66', GREEN, '均价', '17.38', GREEN], ['最高', '17.76', RED, '量比', '1.59', RED],
    ['最低', '17.21', GREEN, '市值', '142.4', GRAY, '亿'], ['现量', '251', '#fff', '总量', '42293', GRAY],
    ['外盘', '16274', RED, '内盘', '26019', GREEN],
];
const statsB = [
    ['换手', '0.51%', GRAY, '股本', '8.27', GRAY, '亿'], ['净资', '8.63', GRAY, '流通', '8.23', GRAY, '亿'],
    ['收益(一)', '0.170', GRAY, 'PE(动)', '25.7', GRAY],
];
const flows = [
    ['净流入额', 15, '-1513', '-21%'], ['大宗流入', 1, '-272.5', '-4%'],
    ['净流入额', 36, '-3510', '-14%', true], ['大宗流入', 11, '-1149', '-5%', true],
];
const ticks = [
    ['14:55', '17.27', '0.3', 'B', 2], ['14:55', '17.27', '0.2', 'B', 1], ['14:55', '17.27', '0.5', 'B', 3], ['14:55', '17.27', '0.5', 'B', 3],
    ['14:55', '17.24', '1.0', 'S', 6], ['14:55', '17.27', '0.5', 'B', 2], ['14:56', '17.26', '0.2', 'B', 1], ['14:56', '17.26', '0.3', 'B', 2],
    ['14:56', '17.25', '0.3', 'S', 2], ['14:56', '17.24', '0.2', 'S', 1], ['14:56', '17.25', '1.7', 'B', 1], ['14:56', '17.25', '6.6', 'B', 2],
    ['14:56', '17.26', '0.3', 'B', 2], ['14:56', '17.25', '0.2', 'S', 1], ['14:56', '17.25', '1.2', 'B', 3], ['14:56', '17.24', '0.9', 'S', 3],
    ['14:56', '17.24', '2.1', 'S', 3], ['14:56', '17.24', '0.5', 'S', 1], ['14:56', '17.24', '12.8', 'S', 8], ['14:57', '17.24', '2.1', 'S', 3],
    ['15:00', '17.23', '43.2', '', 38],
];

const periods = ['分时', '1分钟', '5分钟', '15分钟', '30分钟', '60分钟', '日线', '周线', '月线', '多周期'];
const tools = ['复权', '叠加', '统计', '画线', 'F10', '标记', '-自选', '返回'];
const menus = ['行情', '市场', '资讯', '数据', '专题', '发现', '交易', '行业', '热点'];
const indexes = [
    { name: '上证', ml: 3, gap: 19.5, mr: -13, v: ['3189.25', '-65.31', '-2.01%'], amt: '3392' },
    { name: '深证', ml: 24, gap: 15.5, mr: -9.5, v: ['10808.9', '-241.35', '-2.18%'], amt: '4243' },
    { name: '中小', ml: 27, gap: 18, mr: -14, v: ['7004.12', '-151.82', '-2.12%'], amt: '410.4' },
];

const OrderRows = ({ rows }) => rows.map(([label, price, vol]) => (
    <OrderRow key={label} $row={27.2}>
        <Label>{label}{label === '卖五' && <small>¥</small>}</Label>
        <Num $color={GREEN}>{price}</Num>
        <Num $color={YELLOW}>{vol}<Unit>万</Unit></Num>
    </OrderRow>
));
const StatRows = ({ rows, row }) => rows.map(([a, va, ca, b, vb, cb, unit]) => (
    <StatRow key={a} $row={row}>
        <Label>{a}</Label>
        <Num $color={ca}>{va}</Num>
        <Label $pl={8}>{b}</Label>
        <Num $color={cb}>{vb}{unit && <Unit>{unit}</Unit>}</Num>
    </StatRow>
));

export default function App() {
    return (
        <Page>
            <GlobalStyle />
            <TitleBar>
                <AppLogo />
                <AppName>通达信金融终端</AppName>
                <MainMenu>
                    {menus.map(m => <span key={m}>{m}</span>)}
                    <MenuSerif>L1L2</MenuSerif>
                </MainMenu>
                <Alert $ml={268}>交易未登录</Alert>
                <Alert $ml={23}>新宝股份</Alert>
                <RightMenu>
                    {['功能', '版面', '公式', '选项', '帮助'].map(m => <span key={m}>{m}</span>)}
                </RightMenu>
                <ClockBox>
                    <ClockTime>18:02:00</ClockTime>
                    <span>周六</span>
                </ClockBox>
                <WindowButtons>
                    <ChevronLeft size={22} strokeWidth={2.6} />
                    <Minus size={22} strokeWidth={3} />
                    <RestoreIcon />
                    <X size={22} strokeWidth={2.6} />
                </WindowButtons>
            </TitleBar>

            <Main>
                <LeftColumn>
                    <Toolbar>
                        <ToggleCell><PaneToggle side="left" /></ToggleCell>
                        <Periods>
                            {periods.map(p => <Period key={p} $active={p === '日线'}>{p}</Period>)}
                            <Period>更多<ChevronRight size={18} strokeWidth={1.5} /></Period>
                        </Periods>
                        <ToolButtons>
                            {tools.map(t => <ToolButton key={t}>{t}</ToolButton>)}
                        </ToolButtons>
                    </Toolbar>

                    <Pane $h={698}>
                        <PriceChart />
                        <Legend $pl={4} $top={1}>
                            <LegendItem>新宝股份(日线)</LegendItem>
                            <LegendItem $ml={8}><RoundToggle /></LegendItem>
                            <LegendItem $ml={8}>三线出击暴涨</LegendItem>
                            <LegendItem $ml={66} $color="#666">止盈线: <b>17.72</b><ValueArrow /></LegendItem>
                            <LegendItem $ml={11} $color="#f00000">工作区: -</LegendItem>
                            <LegendItem $ml={7} $color="#e6e600">生命线: <b>17.90</b><ValueArrow /></LegendItem>
                        </Legend>
                    </Pane>

                    <Pane $h={518}>
                        <IndicatorChart />
                        <Legend $pl={3} $top={0}>
                            <RoundToggle />
                            <LegendItem $ml={5}>雷达异动</LegendItem>
                            <LegendItem $ml={8} $color="#0000f0">势: <b>29.88</b><ValueArrow /></LegendItem>
                            <LegendItem $ml={11} $color="#e00000">决策线: <b>11.84</b><ValueArrow /></LegendItem>
                            <LegendItem $ml={17} $color="#e6e600">五十: <b>50.00</b></LegendItem>
                            <LegendItem $ml={8} $color="#e6e600">十: <b>10.00</b></LegendItem>
                            <LegendItem $ml={8}>八五: <b>85.00</b></LegendItem>
                        </Legend>
                    </Pane>

                    <Pane $h={24}>
                        <TimeAxis />
                    </Pane>

                    <TabRow $h={25}>
                        <Tab $w={46}>指标</Tab>
                        <Tab $w={45}>模板</Tab>
                        <Tab $w={46} $color="#3ff">管理</Tab>
                        <Tab $w={67}>另存为</Tab>
                        <Tab $w={66}>绑定到</Tab>
                        <Tab $w={22}>1</Tab>
                    </TabRow>
                    <TabRow $h={26}>
                        <Tab $w={61}>扩展∧</Tab>
                        <Tab $w={84}>关联报价</Tab>
                        <Tab $w={84}>资金分布</Tab>
                        <Tab $w={84} $color={YELLOW}>综合资讯</Tab>
                        <Tab $w={83} $color={YELLOW}>行业资讯</Tab>
                        <Tab $w={84} $color={YELLOW}>互动问答</Tab>
                        <Tab $w={139}>普及版功能说明</Tab>
                    </TabRow>
                </LeftColumn>

                <QuotePanel>
                    <StockHead>
                        <StockName>新宝股份</StockName>
                        <StockCode>002705</StockCode>
                        <Badges><b>R</b><span>500</span></Badges>
                    </StockHead>
                    <PriceRow>
                        <span>17.23</span>
                        <PriceDelta>
                            <svg width="24" height="22" viewBox="0 0 24 22"><path d="M1 1 H23 L12 21Z" fill="#00e600" /></svg>
                            -0.47
                        </PriceDelta>
                        <PricePct>-2.66%</PricePct>
                    </PriceRow>

                    <OrderLine $h={136} $pt={0}><OrderRows rows={sells} /></OrderLine>
                    <Section $h={139} $pt={2}><OrderRows rows={buys} /></Section>
                    <Section $h={146} $pt={1}><StatRows rows={statsA} row={28.6} /></Section>
                    <Section $h={93} $pt={2}><StatRows rows={statsB} row={28.3} /></Section>
                    <Section $h={119} $pt={2}>
                        {flows.map(([name, w, amt, pct, five]) => (
                            <FlowRow key={name + w}>
                                <Label>{five && <i>5</i>}{five && <span>日</span>}{name}</Label>
                                <FlowBar $w={w} />
                                <Num $color={GREEN}>{amt}<Unit>万</Unit></Num>
                                <Num $color={GREEN}>{pct}</Num>
                            </FlowRow>
                        ))}
                    </Section>
                    <TickList>
                        {ticks.map(([time, price, vol, side, count], i) => (
                            <TickRow key={i}>
                                <Num $align="left">{time}</Num>
                                <Num $color={GREEN}>{price}</Num>
                                <Num $color={YELLOW}>{vol}<Unit>万</Unit></Num>
                                <Num $align="center" $color={side === 'B' ? RED : GREEN}>{side}</Num>
                                <Num $color="#a0a0a0">{count}</Num>
                            </TickRow>
                        ))}
                    </TickList>
                </QuotePanel>

                <Strip>
                    {stripIcons.map((icon, i) => <StripItem key={i}>{icon}</StripItem>)}
                    <StripRule />
                    {stripIconsB.map((icon, i) => <StripItem key={i}>{icon}</StripItem>)}
                    <StripRule />
                    {stripIconsC.map((icon, i) => <StripItem key={i}>{icon}</StripItem>)}
                    {['1', '5', '15', '30', '60'].map(t => <StripItem key={t}>{t}</StripItem>)}
                    {['日', '周', '月', 'N', '多', '季', '年'].map(t => <StripItem key={t} $on={t === '日'} $size={19}>{t}</StripItem>)}
                </Strip>
            </Main>

            <StatusBar>
                <svg width="21" height="32" viewBox="0 0 21 32">
                    <rect x="1" y="1" width="19" height="30" rx="2" fill="#f2b040" stroke="#d89020" />
                    <rect x="6" y="10" width="9" height="12" fill="#fbe0a0" />
                </svg>
                {indexes.map(ix => (
                    <IndexGroup key={ix.name} $ml={ix.ml} $gap={ix.gap}>
                        <IndexName $mr={ix.mr}>{ix.name}</IndexName>
                        {ix.v.map(v => <IndexNum key={v}>{v}</IndexNum>)}
                        <IndexNum $color="#111">{ix.amt}<span>亿</span></IndexNum>
                    </IndexGroup>
                ))}
                <StatusRule />
                <IndexName $mr={10}>总成交</IndexName>
                <IndexNum $color="#111">7630<span>亿</span></IndexNum>
            </StatusBar>

            <Watermark>
                <MarkTitle>公式指标网</MarkTitle>
                <MarkLogo><Logo /></MarkLogo>
                <MarkUrl>www.9m8.cn</MarkUrl>
            </Watermark>
        </Page>
    );
}
